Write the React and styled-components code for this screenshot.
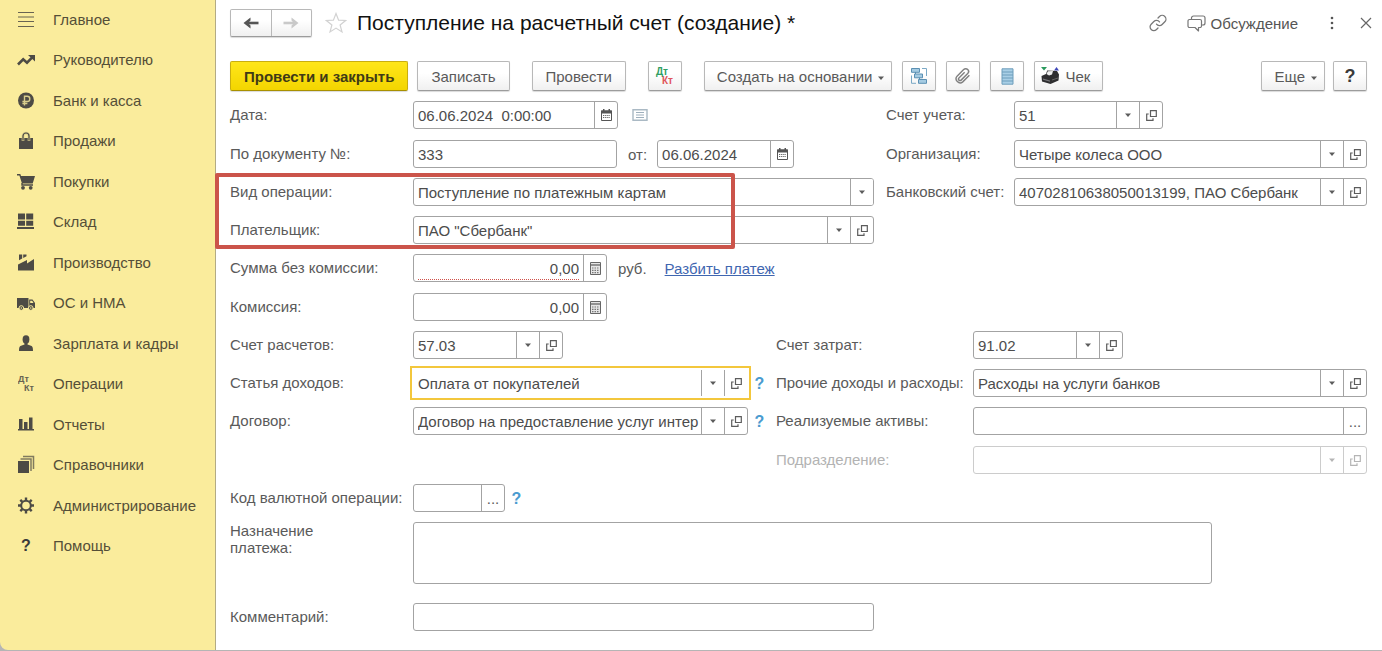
import React from "react";
import styled, { createGlobalStyle, css } from "styled-components";

const GlobalStyle = createGlobalStyle`
  *, *::before, *::after { box-sizing: border-box; }
  body {
    margin: 0;
    background: #fff;
    color: #5a5a5a;
    font: 15px/17px "Liberation Sans", Arial, sans-serif;
  }
  button, input, select, textarea { font: inherit; color: inherit; margin: 0; }
  button { cursor: pointer; }
`;

/* ---------- page frame ---------- */

const Page = styled.div`
  display: flex;
  min-height: 100vh;
  background: #b5b5b5;
  padding-bottom: 1px;
`;

const Sidebar = styled.nav`
  flex: 0 0 216px;
  background: #faec9c;
  border-right: 1px solid #b3ab84;
  border-bottom-left-radius: 8px;
`;

const Menu = styled.ul`
  list-style: none;
  margin: 0;
  padding: 0;
  display: grid;
  grid-auto-rows: 40px 41px;
`;

const MenuLink = styled.a`
  display: flex;
  align-items: center;
  gap: 18px;
  height: 38px;
  padding-left: 17px;
  color: #554f38;
  text-decoration: none;
  white-space: nowrap;
  svg { flex: none; color: #4d4b45; }
`;

const Main = styled.main`
  flex: 1;
  min-width: 0;
  background: #fff;
  padding: 9px 15px 19px 14px;
`;

/* ---------- header ---------- */

const Header = styled.header`
  display: flex;
  align-items: center;
  height: 28px;
  margin-bottom: 24px;
`;

const raised = css`
  border: 1px solid #b8b8b8;
  border-bottom-color: #9c9c9c;
  border-radius: 2px;
  background: linear-gradient(#fff 40%, #f0f0f0);
  box-shadow: 0 1px 1px rgba(0, 0, 0, 0.15);
`;

const NavPair = styled.div`
  ${raised}
  display: flex;
  width: 82px;
  height: 28px;
  margin-right: 13px;
`;

const NavButton = styled.button`
  flex: 1;
  display: grid;
  place-items: center;
  padding: 0;
  border: 0;
  background: none;
  color: #555;
  & + & { border-left: 1px solid #b8b8b8; }
  &:disabled { color: #c9c9c9; cursor: default; }
`;

const Title = styled.h1`
  flex: 1;
  margin: 0 0 0 10px;
  font-size: 21px;
  line-height: 28px;
  font-weight: 400;
  color: #111;
  white-space: nowrap;
`;

const PlainButton = styled.button`
  display: flex;
  align-items: center;
  gap: 5px;
  padding: 0;
  border: 0;
  background: none;
  color: #555;
`;

const HeaderActions = styled.div`
  display: flex;
  align-items: center;
  gap: 20px;
  margin-right: -5px;
`;

const WindowActions = styled.div`
  display: flex;
  align-items: center;
  gap: 26px;
  margin-left: 12px;
`;

/* ---------- toolbar ---------- */

const Toolbar = styled.div`
  display: flex;
  gap: 22px;
  margin-bottom: 10px;
`;

const ButtonGroup = styled.div`
  display: flex;
  gap: ${(p) => p.$gap || 10}px;
  margin-left: ${(p) => (p.$end ? "auto" : 0)};
`;

const ToolButton = styled.button`
  ${raised}
  display: flex;
  align-items: center;
  justify-content: center;
  gap: 5px;
  height: 30px;
  min-width: 34px;
  padding: ${(p) => (p.$icon ? "0" : "0 13px")};
  white-space: nowrap;
  ${(p) =>
    p.$primary &&
    css`
      border-color: #c9ae10;
      border-bottom-color: #a89000;
      background: linear-gradient(#ffe61a, #f3d500);
      color: #3f3a16;
      font-weight: 700;
    `}
`;

const MenuButton = styled(ToolButton)`
  gap: 6px;
  padding: 0 7px 0 12px;
  svg { margin-top: 3px; }
`;

const CheckButton = styled(ToolButton)`
  padding: 0 12px 0 6px;
`;

const QuestionMark = styled.span`
  font-weight: 700;
  font-size: ${(p) => p.$size || 16}px;
  color: #3a3a3a;
`;

/* ---------- form ---------- */

const Form = styled.form`
  display: flex;
  flex-direction: column;
  gap: 11px;
`;

const RowGroup = styled.div`
  display: flex;
  flex-direction: column;
  gap: 10px;
  position: relative;
`;

const Highlight = styled.div`
  position: absolute;
  z-index: 1;
  top: -5px;
  bottom: -5px;
  left: -15px;
  width: 520px;
  border: 4px solid #cb544a;
  border-radius: 2px;
  pointer-events: none;
`;

const Row = styled.div`
  display: grid;
  grid-template-columns: ${(p) => (p.$lower ? 546 : 656)}px minmax(0, 1fr);
`;

const Cell = styled.div`
  display: grid;
  grid-template-columns: ${(p) => p.$label || 183}px minmax(0, 1fr);
  align-items: ${(p) => (p.$top ? "start" : "center")};
`;

const Label = styled.label`
  padding-bottom: 2px;
  white-space: nowrap;
  color: ${(p) => (p.$muted ? "#b3b3b3" : "#5a5a5a")};
`;

const Controls = styled.div`
  display: flex;
  align-items: center;
`;

const frame = css`
  border: 1px solid #a3a3a3;
  border-radius: 3px;
  background: #fff;
`;

const FieldBox = styled.div`
  ${frame}
  display: flex;
  height: 28px;
  width: ${(p) => (p.$width ? `${p.$width}px` : "100%")};
  color: #4c4c4c;
  ${(p) =>
    p.$active &&
    css`
      border-color: transparent;
      border-radius: 0;
      outline: 2px solid #f3c73c;
      outline-offset: 1px;
    `}
  ${(p) => p.$disabled && "border-color: #ccc; color: #bbb;"}
`;

const bare = css`
  flex: 1;
  width: 100%;
  min-width: 0;
  height: 26px;
  padding: 0 4px;
  border: 0;
  outline: 0;
  border-radius: 3px;
  background: transparent;
`;

const TextInput = styled.input`
  ${bare}
  text-align: ${(p) => (p.$right ? "right" : "left")};
  ${(p) =>
    p.$required &&
    css`
      height: 25px;
      margin: 0 4px;
      padding: 2px 0 0;
      border-radius: 0;
      border-bottom: 1px dotted #d0504a;
    `}
`;

const SelectBox = styled.div`
  position: relative;
  flex: 1;
  min-width: 0;
`;

const Select = styled.select`
  ${bare}
  appearance: none;
  padding-right: 24px;
  opacity: 1;
`;

const cell = css`
  width: 23px;
  display: grid;
  place-items: center;
  border: 0;
  border-left: 1px solid ${(p) => (p.$disabled ? "#ccc" : "#a3a3a3")};
  color: ${(p) => (p.$disabled ? "#b5b5b5" : "#5c5c5c")};
`;

const ArrowCell = styled.span`
  ${cell}
  position: absolute;
  top: 0;
  right: 0;
  bottom: 0;
  background: #fff;
  border-radius: 0 2px 2px 0;
  pointer-events: none;
`;

const CellButton = styled.button`
  ${cell}
  flex: none;
  padding: 0;
  background: none;
`;

const Unit = styled.span`
  margin: 0 18px 0 11px;
`;

const FromLabel = styled.label`
  margin: 0 10px 0 11px;
`;

const Link = styled.a`
  color: #3f66b0;
`;

const Hint = styled.button`
  width: 23px;
  padding: 0;
  border: 0;
  background: none;
  color: #4a9bd0;
  font-weight: 700;
  font-size: 16px;
`;

const ListButton = styled(PlainButton)`
  margin-left: 14px;
`;

const Purpose = styled.textarea`
  ${frame}
  display: block;
  width: 100%;
  max-width: 799px;
  height: 62px;
  padding: 4px;
  resize: none;
`;

const WideRow = styled(Cell)`
  margin-top: ${(p) => p.$space || 0}px;
`;

/* ---------- icons ---------- */

const Svg = ({ w = 18, h = w, box, children, ...rest }) => (
  <svg width={w} height={h} viewBox={box || `0 0 ${w} ${h}`} fill="none" aria-hidden="true" {...rest}>
    {children}
  </svg>
);

const menuIcons = {
  lines: (
    <Svg><path d="M1 2.500h16M1 7h16M1 11.500h16M1 16.500h16" stroke="currentColor" strokeWidth="1.200" opacity=".85" /></Svg>
  ),
  trend: (
    <Svg>
      <path d="M1 14.500l5.200-5.200 3.800 3.400 5.500-5.500" stroke="currentColor" strokeWidth="2.600" />
      <path d="M11 5h7v6.500z" fill="currentColor" />
    </Svg>
  ),
  ruble: (
    <Svg>
      <circle cx="9" cy="9.500" r="8" fill="currentColor" />
      <path d="M7.500 14.500V5.300h2.700a2.600 2.600 0 010 5.200H5.400M5.400 12.500h5" stroke="#d8cd8c" strokeWidth="1.400" />
    </Svg>
  ),
  bag: (
    <Svg>
      <path d="M2 7h14v11H2z" fill="currentColor" />
      <path d="M6 10V5a3 3 0 016 0v5" stroke="#d8cd8c" strokeWidth="2.600" />
      <path d="M6 9.500V5a3 3 0 016 0v4.500" stroke="currentColor" strokeWidth="1.200" />
    </Svg>
  ),
  cart: (
    <Svg>
      <path d="M0 2h3.300l.7 2H18l-2.300 7.500H5L2.400 3.500H0z" fill="currentColor" />
      <path d="M5 11v2h11" stroke="currentColor" strokeWidth="1.400" />
      <circle cx="6" cy="15.800" r="1.900" fill="currentColor" />
      <circle cx="13.700" cy="15.800" r="1.900" fill="currentColor" />
    </Svg>
  ),
  boxes: (
    <Svg>
      <path d="M1 1.500h7v6H1zM9.200 1.500h7v6h-7zM1 8.700h7v5H1zM9.200 8.700h7v5h-7zM0 15h17v2H0z" fill="currentColor" />
    </Svg>
  ),
  factory: (
    <Svg>
      <path d="M1 17.500v-6l9-4.500v3.500l7-4.500v11.500z" fill="currentColor" />
      <path d="M2 1.500h3.200v4L2 7.300zM6.200 1.500h3.300v1.800L6.200 5z" fill="currentColor" />
    </Svg>
  ),
  truck: (
    <Svg>
      <path d="M0 5h11.500v10H0zM12.200 6.500h3.300L18 10v5h-5.800z" fill="currentColor" />
      <path d="M13.200 7.800h2l1.300 2.200h-3.300z" fill="#faec9c" />
      <circle cx="4.300" cy="15" r="2.300" fill="currentColor" stroke="#faec9c" />
      <circle cx="13.800" cy="15" r="2.300" fill="currentColor" stroke="#faec9c" />
      <circle cx="4.300" cy="15" r=".8" fill="#faec9c" />
      <circle cx="13.800" cy="15" r=".8" fill="#faec9c" />
    </Svg>
  ),
  person: (
    <Svg>
      <ellipse cx="9" cy="5.500" rx="3.400" ry="4.200" fill="currentColor" />
      <path d="M7.500 8.500h3v2l3.500 1.200c1.500.5 2 1.800 2 5.300H2c0-3.500.5-4.800 2-5.300l3.500-1.200z" fill="currentColor" />
    </Svg>
  ),
  dtkt: (
    <Svg fill="currentColor" fontWeight="700" fontSize="9" opacity=".85">
      <text x="1" y="8">Дт</text>
      <text x="7" y="17">Кт</text>
    </Svg>
  ),
  chart: (
    <Svg>
      <path d="M2 4h3.500v10H2zM7 7h3.500v7H7zM12 2.500h3.500V14H12zM1 14h16v1.500H1z" fill="currentColor" />
    </Svg>
  ),
  books: (
    <Svg>
      <path d="M1 6h11v12H1z" fill="currentColor" />
      <path d="M3.500 4H14v12M6 1.500h10.500V14" stroke="currentColor" strokeWidth="1.500" opacity=".7" />
    </Svg>
  ),
  gear: (
    <Svg>
      <circle cx="9" cy="9.500" r="4.800" stroke="currentColor" strokeWidth="2" />
      <path
        d="M9 1.500v3M9 14.500v3M1 9.500h3M14 9.500h3M3.300 3.800l2 2M12.700 13.200l2 2M14.700 3.800l-2 2M5.300 13.200l-2 2"
        stroke="currentColor"
        strokeWidth="2.400"
      />
    </Svg>
  ),
};

const MenuQuestion = styled(QuestionMark)`
  width: 18px;
  text-align: center;
`;

const ArrowIcon = ({ back }) => (
  <Svg w={16} h={12}>
    <path d={back ? "M15.500 6H5" : "M.5 6H11"} stroke="currentColor" strokeWidth="2.600" />
    <path d={back ? "M7.500.5v3L5 6l2.500 2.500v3L.5 6z" : "M8.500.5v3L11 6 8.500 8.500v3l7-5.500z"} fill="currentColor" />
  </Svg>
);

const StarIcon = () => (
  <Svg w={22}>
    <path
      d="M11 1.500l2.600 6.600 7 .4-5.500 4.500 1.900 7L11 16.100 5 20l1.900-7L1.400 8.500l7-.4z"
      stroke="#d2d2d2"
      strokeWidth="1.200"
    />
  </Svg>
);

const ChainIcon = () => (
  <Svg w={18} box="0 0 24 24" stroke="#777" strokeWidth="1.700" strokeLinecap="round">
    <path d="M10 13.500a5 5 0 007.500.5l3.600-3.600a5 5 0 00-7.100-7.100L12 5.300" />
    <path d="M14 10.500a5 5 0 00-7.500-.5l-3.600 3.600a5 5 0 007.100 7.100l2-2" />
  </Svg>
);

const ChatIcon = () => (
  <Svg w={19} h={17} stroke="#777" strokeWidth="1.200" strokeLinejoin="round">
    <path d="M4.500 4.500V3a2 2 0 012-2H16a2 2 0 012 2v5a2 2 0 01-2 2h-1" />
    <path d="M2.500 4.500H13a1.500 1.500 0 011.500 1.500v5a1.500 1.500 0 01-1.500 1.500h-1.500V16L8 12.500H2.500A1.500 1.500 0 011 11V6a1.500 1.500 0 011.500-1.500z" />
  </Svg>
);

const DotsIcon = () => (
  <Svg w={4} h={14} fill="#555">
    <circle cx="2" cy="2" r="1.300" />
    <circle cx="2" cy="7" r="1.300" />
    <circle cx="2" cy="12" r="1.300" />
  </Svg>
);

const CloseIcon = () => (
  <Svg w={12}><path d="M1 1l10 10M11 1L1 11" stroke="#666" strokeWidth="1.200" /></Svg>
);

const Caret = () => (
  <Svg w={6} h={4} box="0 0 6 4"><path d="M0 .5h6L3 4z" fill="currentColor" /></Svg>
);

const OpenIcon = () => (
  <Svg w={11} h={11}>
    <path d="M4.500.7h5.800v5.800H4.500zM2.700 4H.7v6.300H7V8.300" stroke="currentColor" strokeWidth="1.200" />
  </Svg>
);

const CalendarIcon = () => (
  <Svg w={11} h={12}>
    <path d="M.5 2h10v9.500H.5z" stroke="#555" />
    <path d="M0 1.500h11v3H0zM2 0h1.500v2H2zM7.500 0H9v2H7.500z" fill="#555" />
    <path d="M2 6.500h7M2 8.500h7" stroke="#666" strokeWidth="1.200" strokeDasharray="1.300 .8" />
  </Svg>
);

const CalcIcon = () => (
  <Svg w={11} h={13}>
    <path d="M.5.5h10v12H.5z" fill="#e6e6e6" stroke="#666" />
    <path d="M1 3h9" stroke="#777" strokeWidth="1.500" />
    <path d="M2 6h7M2 8.300h7M2 10.600h7" stroke="#777" strokeWidth="1.200" strokeDasharray="1.500 1" />
  </Svg>
);

const ListIcon = () => (
  <Svg w={16} h={12}>
    <path d="M1 .7h14v10.600H1z" stroke="#aab9c4" strokeWidth="1.400" />
    <path d="M4 3.500h8M4 6h8M4 8.500h8" stroke="#9fb0bd" />
  </Svg>
);

const DtKtIcon = () => (
  <Svg w={20} h={20} fontWeight="700" fontSize="10">
    <text x="1" y="9" fill="#2f9e62">Дт</text>
    <text x="7" y="18" fill="#e0565b">Кт</text>
  </Svg>
);

const StructureIcon = () => (
  <Svg w={18} h={18}>
    <path d="M1.500 1.500h8v3.800h-8zM4.500 7h8v3.800h-8zM8.500 12.500h8v3.800h-8z" fill="#a5cbe2" stroke="#5b90b3" />
    <path d="M5.500 5v2M9.500 10.500v2" stroke="#5b90b3" />
    <path d="M12 1.500h4.500V9M1.500 8.500v7.800H6" stroke="#7ba9c6" />
  </Svg>
);

const ClipIcon = () => (
  <Svg w={18} box="0 0 24 24">
    <path
      d="M20.500 11l-8.800 8.800a5.400 5.400 0 01-7.600-7.600l8.800-8.800a3.800 3.800 0 015.400 5.400l-8.800 8.700a2 2 0 01-2.900-2.900l7.600-7.500"
      stroke="#808080"
      strokeWidth="1.900"
    />
  </Svg>
);

const RegisterIcon = () => (
  <Svg w={13} h={17}>
    <path d="M1 .8h11v15.400H1z" fill="#a9cfe6" stroke="#6d9dbb" />
    <path d="M1 4h11M1 7h11M1 10h11M1 13h11" stroke="#6d9dbb" />
  </Svg>
);

const PrinterIcon = () => (
  <Svg w={19} h={18}>
    <path d="M0 0h6L3 3.500z" fill="#2b9a5d" />
    <path d="M13 3.500h5L15.500 0z" fill="#4048b8" />
    <path d="M.5 9l4.500-2 1.200-3.500L16 4l2 3.500-.5 6L9.500 17 1 14.500z" fill="#2e2e30" />
    <path d="M5.500 7l1.300-2.800L12 4l-1 3.500-3 1z" fill="#efefef" />
    <path d="M2 11.500l7 2v1.300l-7-2z" fill="#77777a" />
    <path d="M11 13l6-2" stroke="#666" />
  </Svg>
);

/* ---------- field building blocks ---------- */

function Picker({ id, value = "", width, options, open = true, active, disabled }) {
  return (
    <FieldBox $width={width} $active={active} $disabled={disabled}>
      <SelectBox>
        <Select id={id} defaultValue={value} disabled={disabled}>
          {(options || [value]).map((o) => <option key={o}>{o}</option>)}
        </Select>
        <ArrowCell $disabled={disabled}><Caret /></ArrowCell>
      </SelectBox>
      {open && (
        <CellButton type="button" aria-label="Открыть" disabled={disabled} $disabled={disabled}>
          <OpenIcon />
        </CellButton>
      )}
    </FieldBox>
  );
}

function Entry({ id, value = "", width, right, required, action, icon }) {
  return (
    <FieldBox $width={width}>
      <TextInput id={id} defaultValue={value} $right={right} $required={required} />
      {icon && <CellButton type="button" aria-label={action}>{icon}</CellButton>}
    </FieldBox>
  );
}

function Field({ id, label, labelWidth, muted, children }) {
  return (
    <Cell $label={labelWidth}>
      <Label htmlFor={id} $muted={muted}>{label}</Label>
      <Controls>{children}</Controls>
    </Cell>
  );
}

const menu = [
  ["Главное", "lines"],
  ["Руководителю", "trend"],
  ["Банк и касса", "ruble"],
  ["Продажи", "bag"],
  ["Покупки", "cart"],
  ["Склад", "boxes"],
  ["Производство", "factory"],
  ["ОС и НМА", "truck"],
  ["Зарплата и кадры", "person"],
  ["Операции", "dtkt"],
  ["Отчеты", "chart"],
  ["Справочники", "books"],
  ["Администрирование", "gear"],
  ["Помощь", null],
];

export default function App() {
  return (
    <Page>
      <GlobalStyle />
      <Sidebar aria-label="Разделы">
        <Menu>
          {menu.map(([text, icon]) => (
            <li key={text}>
              <MenuLink href="#">
                {icon ? menuIcons[icon] : <MenuQuestion aria-hidden="true">?</MenuQuestion>}
                {text}
              </MenuLink>
            </li>
          ))}
        </Menu>
      </Sidebar>

      <Main>
        <Header>
          <NavPair>
            <NavButton type="button" aria-label="Назад"><ArrowIcon back /></NavButton>
            <NavButton type="button" aria-label="Вперед" disabled><ArrowIcon /></NavButton>
          </NavPair>
          <PlainButton type="button" aria-label="В избранное"><StarIcon /></PlainButton>
          <Title>Поступление на расчетный счет (создание) *</Title>
          <HeaderActions>
            <PlainButton type="button" aria-label="Получить ссылку"><ChainIcon /></PlainButton>
            <PlainButton type="button"><ChatIcon />Обсуждение</PlainButton>
            <WindowActions>
              <PlainButton type="button" aria-label="Меню"><DotsIcon /></PlainButton>
              <PlainButton type="button" aria-label="Закрыть"><CloseIcon /></PlainButton>
            </WindowActions>
          </HeaderActions>
        </Header>

        <Toolbar>
          <ButtonGroup $gap={9}>
            <ToolButton type="button" $primary>Провести и закрыть</ToolButton>
            <ToolButton type="button">Записать</ToolButton>
          </ButtonGroup>
          <ToolButton type="button">Провести</ToolButton>
          <ToolButton type="button" $icon aria-label="Проводки"><DtKtIcon /></ToolButton>
          <ButtonGroup>
            <MenuButton type="button">Создать на основании<Caret /></MenuButton>
            <ToolButton type="button" $icon aria-label="Структура подчиненности"><StructureIcon /></ToolButton>
            <ToolButton type="button" $icon aria-label="Файлы"><ClipIcon /></ToolButton>
            <ToolButton type="button" $icon aria-label="Реестр"><RegisterIcon /></ToolButton>
            <CheckButton type="button"><PrinterIcon />Чек</CheckButton>
          </ButtonGroup>
          <ButtonGroup $end $gap={8}>
            <MenuButton type="button">Еще<Caret /></MenuButton>
            <ToolButton type="button" $icon aria-label="Справка"><QuestionMark $size={18}>?</QuestionMark></ToolButton>
          </ButtonGroup>
        </Toolbar>

        <Form>
          <Row>
            <Field id="date" label="Дата:">
              <Entry id="date" value="06.06.2024  0:00:00" width={205} action="Календарь" icon={<CalendarIcon />} />
              <ListButton type="button" aria-label="Список"><ListIcon /></ListButton>
            </Field>
            <Field id="account" label="Счет учета:" labelWidth={128}>
              <Picker id="account" value="51" width={149} />
            </Field>
          </Row>

          <RowGroup>
            <Row>
              <Field id="docNumber" label="По документу №:">
                <Entry id="docNumber" value="333" width={204} />
                <FromLabel htmlFor="docDate">от:</FromLabel>
                <Entry id="docDate" value="06.06.2024" width={137} action="Календарь" icon={<CalendarIcon />} />
              </Field>
              <Field id="company" label="Организация:" labelWidth={128}>
                <Picker id="company" value="Четыре колеса ООО" />
              </Field>
            </Row>
            <RowGroup>
              <Highlight />
              <Row>
                <Field id="operation" label="Вид операции:">
                  <Picker id="operation" value="Поступление по платежным картам" width={461} open={false} />
                </Field>
                <Field id="bankAccount" label="Банковский счет:" labelWidth={128}>
                  <Picker id="bankAccount" value="40702810638050013199, ПАО Сбербанк" />
                </Field>
              </Row>
              <Row>
                <Field id="payer" label="Плательщик:">
                  <Picker id="payer" value={'ПАО "Сбербанк"'} width={461} />
                </Field>
              </Row>
            </RowGroup>
            <Row>
              <Field id="amount" label="Сумма без комиссии:">
                <Entry id="amount" value="0,00" width={194} right required action="Калькулятор" icon={<CalcIcon />} />
                <Unit>руб.</Unit>
                <Link href="#">Разбить платеж</Link>
              </Field>
            </Row>
          </RowGroup>

          <RowGroup>
            <Row>
              <Field id="fee" label="Комиссия:">
                <Entry id="fee" value="0,00" width={194} right action="Калькулятор" icon={<CalcIcon />} />
              </Field>
            </Row>
            <Row $lower>
              <Field id="settlement" label="Счет расчетов:">
                <Picker id="settlement" value="57.03" width={150} />
              </Field>
              <Field id="costAccount" label="Счет затрат:" labelWidth={197}>
                <Picker id="costAccount" value="91.02" width={150} />
              </Field>
            </Row>
            <Row $lower>
              <Field id="income" label="Статья доходов:">
                <Picker id="income" value="Оплата от покупателей" width={335} active />
                <Hint type="button">?</Hint>
              </Field>
              <Field id="other" label="Прочие доходы и расходы:" labelWidth={197}>
                <Picker id="other" value="Расходы на услуги банков" />
              </Field>
            </Row>
            <Row $lower>
              <Field id="contract" label="Договор:">
                <Picker id="contract" value="Договор на предоставление услуг интер" width={335} />
                <Hint type="button">?</Hint>
              </Field>
              <Field id="assets" label="Реализуемые активы:" labelWidth={197}>
                <Entry id="assets" action="Выбрать" icon="..." />
              </Field>
            </Row>
          </RowGroup>

          <RowGroup>
            <Row $lower>
              <span />
              <Field id="department" label="Подразделение:" labelWidth={197} muted>
                <Picker id="department" disabled />
              </Field>
            </Row>
            <Row $lower>
              <Field id="currencyCode" label="Код валютной операции:">
                <Entry id="currencyCode" width={92} action="Выбрать" icon="..." />
                <Hint type="button">?</Hint>
              </Field>
            </Row>
            <WideRow $top>
              <Label htmlFor="purpose">Назначение<br />платежа:</Label>
              <Purpose id="purpose" />
            </WideRow>
            <WideRow $space={9}>
              <Label htmlFor="comment">Комментарий:</Label>
              <Entry id="comment" width={461} />
            </WideRow>
          </RowGroup>
        </Form>
      </Main>
    </Page>
  );
}
